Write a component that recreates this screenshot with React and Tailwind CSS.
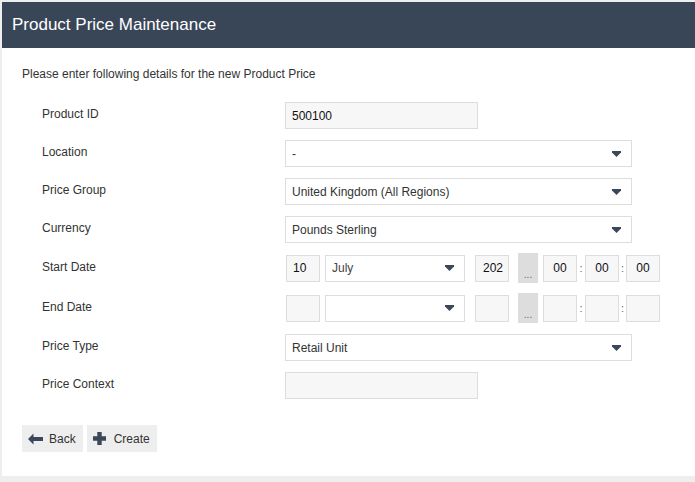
import React from 'react';

const Caret = () => (
    <svg width="9" height="6" viewBox="0 0 9 6" className="shrink-0">
        <path d="M0 0h9v1.5L4.5 6 0 1.5z" fill="#3b4859" />
    </svg>
);

const TextBox = ({ value, className = '' }) => (
    <div className={`h-[27px] border border-[#dddddd] bg-[#f7f7f7] flex items-center px-[6px] text-[12px] text-[#111] ${className}`}>
        {value}
    </div>
);

const Select = ({ value, className = '' }) => (
    <div className={`h-[27px] border border-[#dddddd] bg-white flex items-center justify-between pl-[6px] pr-[10px] text-[12px] text-[#333] ${className}`}>
        <span>{value}</span>
        <Caret />
    </div>
);

const Row = ({ label, children, className = '' }) => (
    <div className={`flex items-center ${className}`}>
        <div className="w-[263px] pl-[20px] text-[12px] text-[#333] -mt-[3px]">{label}</div>
        {children}
    </div>
);

const DateTime = ({ day, month, year, h, m, s }) => (
    <div className="flex items-center">
        <TextBox value={day} className="w-[34px] ml-[1px]" />
        <Select value={month} className="w-[140px] ml-[5px] text-[#444]" />
        <TextBox value={year} className="w-[34px] ml-[10px] !px-[7px]" />
        <div className="w-[20px] h-[30px] ml-[9px] bg-[#dddddd] flex items-end justify-center pb-[3px] text-[10px] leading-none text-[#666]">...</div>
        <TextBox value={h} className="w-[34px] ml-[5px] justify-center" />
        <span className="w-[8px] text-center text-[11px] text-[#666]">:</span>
        <TextBox value={m} className="w-[34px] justify-center" />
        <span className="w-[7px] text-center text-[11px] text-[#666]">:</span>
        <TextBox value={s} className="w-[34px] justify-center" />
    </div>
);

const App = () => {
    return (
        <div className="h-[482px] w-[695px] bg-[#eeeeee] pt-[2px] pl-[2px] overflow-hidden" style={{ fontFamily: '"Liberation Sans", Arial, sans-serif' }}>
            <div className="w-[693px] h-[474px] bg-white">
                <div className="h-[46px] bg-[#384657] text-white text-[17px] pl-[10px] flex items-center">
                    Product Price Maintenance
                </div>
                <div className="px-[20px] pt-[19px]">
                    <p className="text-[12px] text-[#333] leading-[14px]">Please enter following details for the new Product Price</p>

                    <div className="mt-[21px]">
                        <Row label="Product ID">
                            <TextBox value="500100" className="w-[193px]" />
                        </Row>
                        <Row label="Location" className="mt-[11px]">
                            <Select value="-" className="w-[347px]" />
                        </Row>
                        <Row label="Price Group" className="mt-[11px]">
                            <Select value="United Kingdom (All Regions)" className="w-[347px]" />
                        </Row>
                        <Row label="Currency" className="mt-[11px]">
                            <Select value="Pounds Sterling" className="w-[347px]" />
                        </Row>
                        <Row label="Start Date" className="mt-[10px]">
                            <DateTime day="10" month="July" year="202" h="00" m="00" s="00" />
                        </Row>
                        <Row label="End Date" className="mt-[10px]">
                            <DateTime day="" month="" year="" h="" m="" s="" />
                        </Row>
                        <Row label="Price Type" className="mt-[11px]">
                            <Select value="Retail Unit" className="w-[347px]" />
                        </Row>
                        <Row label="Price Context" className="mt-[11px]">
                            <TextBox value="" className="w-[193px]" />
                        </Row>
                    </div>

                    <div className="flex gap-[4px] mt-[26px]">
                        <button className="h-[27px] pl-[6px] pr-[7px] bg-[#eeeeee] flex items-center gap-[6px] text-[12px] text-[#333]">
                            <svg width="15" height="12" viewBox="0 0 15 12">
                                <path d="M0 6 5.5 0.5v3.5h9.5v4H5.5v3.5z" fill="#3b4859" />
                            </svg>
                            Back
                        </button>
                        <button className="h-[27px] pl-[6px] pr-[7px] bg-[#eeeeee] flex items-center gap-[8px] text-[12px] text-[#333]">
                            <svg width="13" height="13" viewBox="0 0 13 13">
                                <path d="M4.3 0h4.4v4.3H13v4.4H8.7V13H4.3V8.7H0V4.3h4.3z" fill="#3b4859" />
                            </svg>
                            Create
                        </button>
                    </div>
                </div>
            </div>
        </div>
    );
};

export default App;
